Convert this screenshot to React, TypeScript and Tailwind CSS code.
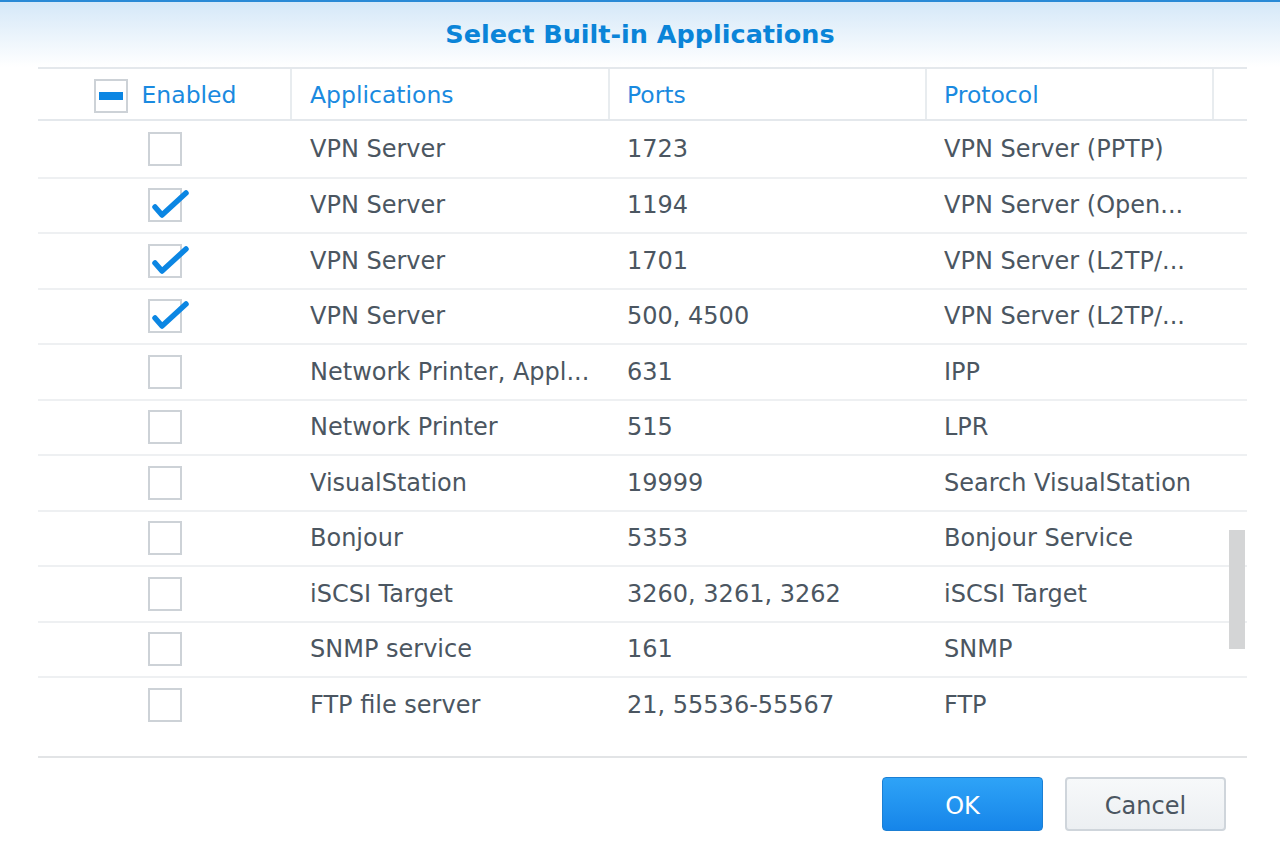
import React from 'react';

type Row = { on: boolean; app: string; ports: string; protocol: string };

const rows: Row[] = [
  { on: false, app: 'VPN Server', ports: '1723', protocol: 'VPN Server (PPTP)' },
  { on: true, app: 'VPN Server', ports: '1194', protocol: 'VPN Server (Open...' },
  { on: true, app: 'VPN Server', ports: '1701', protocol: 'VPN Server (L2TP/...' },
  { on: true, app: 'VPN Server', ports: '500, 4500', protocol: 'VPN Server (L2TP/...' },
  { on: false, app: 'Network Printer, Appl...', ports: '631', protocol: 'IPP' },
  { on: false, app: 'Network Printer', ports: '515', protocol: 'LPR' },
  { on: false, app: 'VisualStation', ports: '19999', protocol: 'Search VisualStation' },
  { on: false, app: 'Bonjour', ports: '5353', protocol: 'Bonjour Service' },
  { on: false, app: 'iSCSI Target', ports: '3260, 3261, 3262', protocol: 'iSCSI Target' },
  { on: false, app: 'SNMP service', ports: '161', protocol: 'SNMP' },
  { on: false, app: 'FTP file server', ports: '21, 55536-55567', protocol: 'FTP' },
];

function Checkbox({ checked }: { checked: boolean }) {
  return (
    <div className="relative w-[34px] h-[34px] border-2 border-[#cdd2d7] bg-white">
      {checked && (
        <svg className="absolute left-[-2px] top-[-8px] w-[42px] h-[42px]" viewBox="0 0 42 42">
          <path
            d="M7 25 L14 33 L38 11"
            fill="none"
            stroke="#0b86e3"
            strokeWidth={5.5}
            strokeLinecap="round"
            strokeLinejoin="round"
          />
        </svg>
      )}
    </div>
  );
}

export default function App() {
  return (
    <div className="relative w-[1280px] h-[846px] bg-white overflow-hidden font-['DejaVu_Sans',sans-serif]">
      {/* Title bar */}
      <div className="h-[67px] border-t-2 border-[#2a8ad6] bg-gradient-to-b from-[#d5e8f8] to-white flex items-center justify-center">
        <h1 className="text-[25.5px] font-bold text-[#0a84d8]">Select Built-in Applications</h1>
      </div>

      {/* Table */}
      <div className="mx-[38px] mr-[33px]">
        <div className="flex h-[54px] border-t-2 border-b-2 border-[#e4e8ec] text-[23.5px] text-[#1a8ae0]">
          <div className="w-[254px] flex items-center justify-center gap-[14px] pt-[4px] pl-[2px] border-r-2 border-[#e8ecef]">
            <div className="w-[34px] h-[34px] border-2 border-[#cdd2d7] bg-white flex items-center justify-center">
              <div className="w-[24px] h-[8px] bg-[#0b86e3]" />
            </div>
            <span>Enabled</span>
          </div>
          <div className="w-[318px] flex items-center pl-[18px] pt-[4px] border-r-2 border-[#e8ecef]">Applications</div>
          <div className="w-[317px] flex items-center pl-[17px] pt-[4px] border-r-2 border-[#e8ecef]">Ports</div>
          <div className="w-[287px] flex items-center pl-[17px] pt-[4px] border-r-2 border-[#e8ecef]">Protocol</div>
          <div className="flex-1" />
        </div>

        <div className="h-[635px] text-[24px] text-[#4b5661]">
          {rows.map((r, i) => (
            <div
              key={i}
              className={`flex h-[55.5px] items-center ${i > 0 ? 'border-t-2 border-[#eef0f2]' : ''}`}
            >
              <div className="w-[254px] flex justify-center">
                <Checkbox checked={r.on} />
              </div>
              <div className="w-[318px] pl-[18px] pr-[20px] whitespace-nowrap overflow-hidden">{r.app}</div>
              <div className="w-[317px] pl-[17px] whitespace-nowrap">{r.ports}</div>
              <div className="w-[287px] pl-[17px] whitespace-nowrap">{r.protocol}</div>
              <div className="flex-1" />
            </div>
          ))}
        </div>

        {/* Footer */}
        <div className="border-t-2 border-[#e2e4e6] pt-[19px] flex justify-end gap-[22px] pr-[21px]">
          <button className="w-[161px] h-[54px] pt-[4px] rounded-[4px] border border-[#1b7fd4] bg-gradient-to-b from-[#2ea3f7] to-[#1685e9] text-white text-[24px]">
            OK
          </button>
          <button className="w-[161px] h-[54px] pt-[4px] rounded-[4px] border-2 border-[#cfd5db] bg-gradient-to-b from-[#f7f9fa] to-[#eceff2] text-[#4b5661] text-[24px]">
            Cancel
          </button>
        </div>
      </div>

      {/* Scrollbar thumb */}
      <div className="absolute left-[1229px] top-[530px] w-[16px] h-[119px] bg-[#d4d5d6]" />
    </div>
  );
}
